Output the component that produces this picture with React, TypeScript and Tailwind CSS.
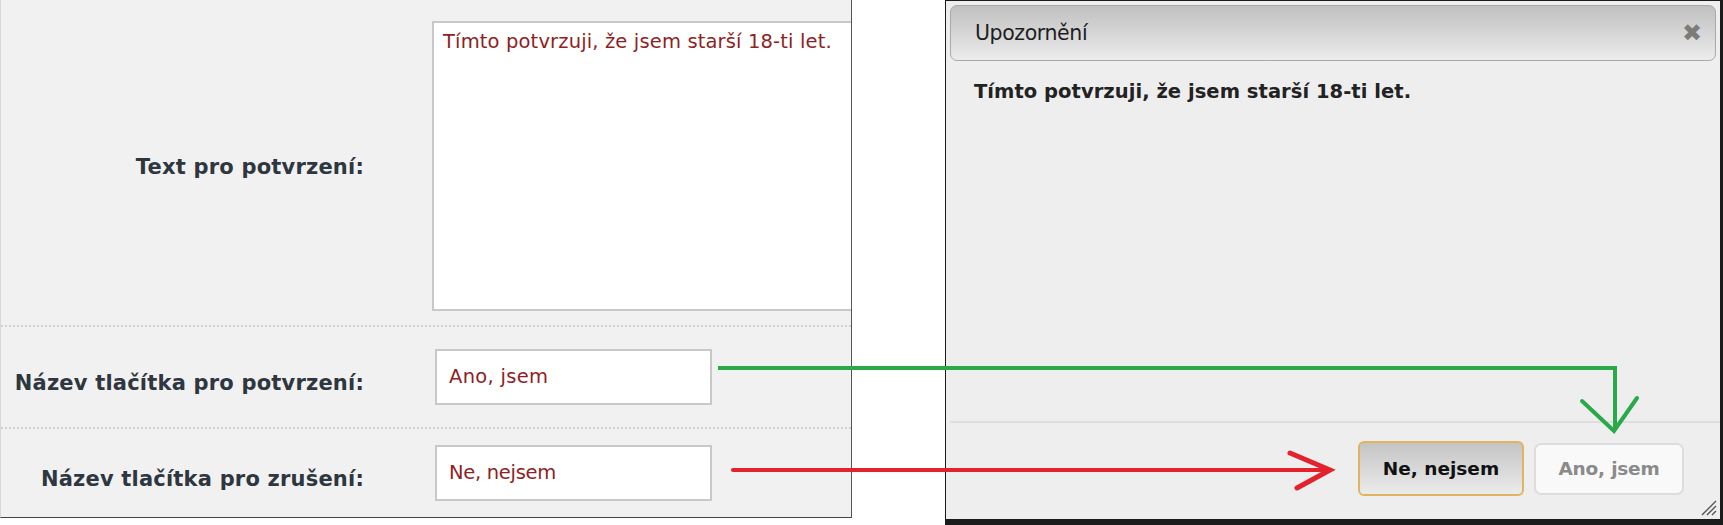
import React from "react";

const font = { fontFamily: '"DejaVu Sans", "Noto Sans", sans-serif' };

export default function App() {
  return (
    <div className="relative w-[1723px] h-[525px] bg-white flex overflow-hidden" style={font}>
      {/* Left settings panel */}
      <div className="w-[852px] h-[518px] shrink-0 bg-[#f1f1f1] border-l border-l-[#d8d8d8] border-r border-r-[#555] border-b border-b-[#444] flex flex-col overflow-hidden">
        <div className="h-[325px] shrink-0 flex">
          <div className="w-[363px] shrink-0 flex items-center justify-end pt-[10px] text-[21px] font-bold tracking-[0.2px] text-[#2e3640] whitespace-nowrap">
            Text pro potvrzení:
          </div>
          <div className="ml-[68px] mt-[21px] h-[290px] w-[440px] shrink-0 bg-white border-2 border-[#c8c8c8] px-[9px] pt-[7px] text-[19.5px] leading-[24px] tracking-[0.15px] text-[#8e1f24] whitespace-nowrap">
            Tímto potvrzuji, že jsem starší 18-ti let.
          </div>
        </div>
        <div className="h-0 border-t-2 border-dotted border-[#d0d0d0]" />
        <div className="h-[100px] shrink-0 flex items-center">
          <div className="w-[363px] shrink-0 flex justify-end pt-[14px] text-[21px] font-bold tracking-[0.2px] text-[#2e3640] whitespace-nowrap">
            Název tlačítka pro potvrzení:
          </div>
          <div className="ml-[71px] h-[56px] w-[277px] bg-white border-2 border-[#c8c8c8] flex items-center px-[12px] text-[19.5px] tracking-[0.3px] text-[#8e1f24]">
            Ano, jsem
          </div>
        </div>
        <div className="h-0 border-t-2 border-dotted border-[#d0d0d0]" />
        <div className="flex-1 flex items-center">
          <div className="w-[363px] shrink-0 flex justify-end pt-[14px] text-[21px] font-bold tracking-[0.2px] text-[#2e3640] whitespace-nowrap">
            Název tlačítka pro zrušení:
          </div>
          <div className="ml-[71px] h-[56px] w-[277px] bg-white border-2 border-[#c8c8c8] flex items-center px-[12px] text-[19.5px] tracking-[-0.3px] text-[#8e1f24]">
            Ne, nejsem
          </div>
        </div>
      </div>

      {/* gap */}
      <div className="w-[93px] shrink-0" />

      {/* Right dialog */}
      <div className="w-[778px] h-[525px] shrink-0 bg-[#1b1b1b] pl-px pr-[3px] pb-[6px] pt-px">
        <div className="relative h-full bg-[#eeeeee] flex flex-col">
          <div className="mx-[4px] mt-[4px] h-[56px] rounded-[7px] border border-[#a9a9a9] bg-gradient-to-b from-[#c0c0c0] to-[#ececec] flex items-center justify-between pl-[24px] pr-[13px]">
            <span className="text-[20.5px] tracking-[-0.4px] text-[#1e1e1e]">Upozornění</span>
            <span className="text-[24px] font-bold text-[#7c7c7c] leading-none">✖</span>
          </div>
          <div className="pl-[28px] pt-[16px] text-[19.5px] font-bold tracking-[0.05px] text-[#222] whitespace-nowrap">
            Tímto potvrzuji, že jsem starší 18-ti let.
          </div>
          <div className="flex-1" />
          <div className="ml-[4px] border-t-2 border-[#dedede]" />
          <div className="h-[96px] flex items-start justify-end pt-[18px] pr-[36px] gap-[10px]">
            <button className="w-[166px] h-[55px] rounded-[6px] border-2 border-[#e2b461] bg-gradient-to-b from-[#c4c4c4] to-[#ececec] text-[18.5px] font-bold tracking-[0px] text-[#111]">
              Ne, nejsem
            </button>
            <button className="w-[150px] h-[52px] mt-[2px] rounded-[7px] border-2 border-[#dddddd] bg-[#f9f9f9] text-[18.5px] font-bold tracking-[-0.2px] text-[#8a8a8a]">
              Ano, jsem
            </button>
          </div>
          <svg className="absolute right-[3px] bottom-[3px]" width="18" height="18" viewBox="0 0 18 18">
            <path d="M17 3 L3 17 M17 8 L8 17 M17 13 L13 17" stroke="#555" strokeWidth="1.4" fill="none" />
          </svg>
        </div>
      </div>

      {/* Annotation arrows */}
      <svg className="absolute inset-0 pointer-events-none" width="1723" height="525" viewBox="0 0 1723 525">
        <path d="M718 368 H1615 V429" stroke="#2aa94a" strokeWidth="4" fill="none" />
        <path d="M1582 401 L1614 431 L1637 398" stroke="#2aa94a" strokeWidth="4" fill="none" strokeLinecap="round" strokeLinejoin="miter" />
        <path d="M733 470 H1326" stroke="#e3222d" strokeWidth="4" fill="none" strokeLinecap="round" />
        <path d="M1290 453 L1330 470 L1297 488" stroke="#e3222d" strokeWidth="5" fill="none" strokeLinecap="round" />
      </svg>
    </div>
  );
}
